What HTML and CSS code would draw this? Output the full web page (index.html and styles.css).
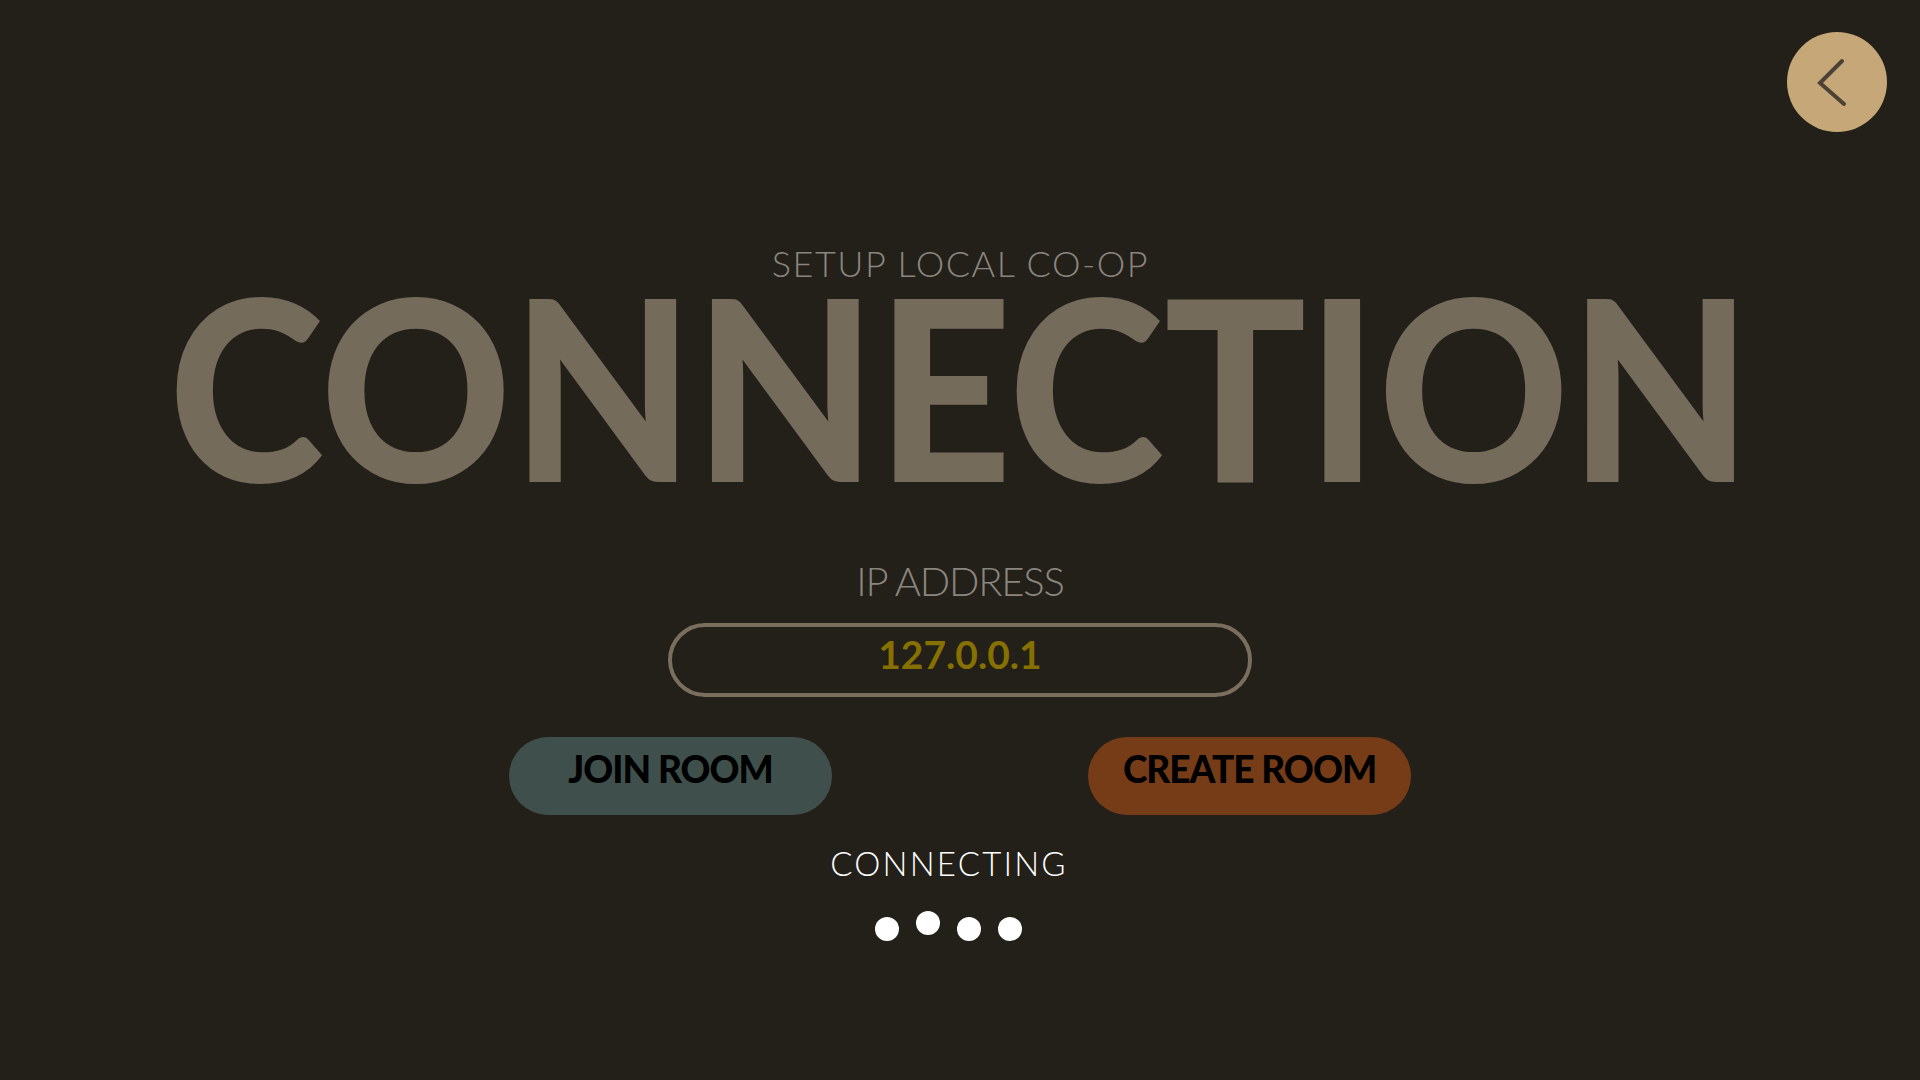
FILE: index.html
```html
<!DOCTYPE html>
<html lang="en">
<head>
<meta charset="utf-8">
<title>Connection</title>
<link rel="stylesheet" href="styles.css">
</head>
<body>
<button class="back" aria-label="Back">
  <svg viewBox="0 0 100 100" width="100" height="100"><polyline points="55,29 33,51 57,72" /></svg>
</button>
<main class="screen">
  <p class="subtitle">SETUP LOCAL CO-OP</p>
  <h1 class="title">CONNECTION</h1>
  <p class="ip-label">IP ADDRESS</p>
  <div class="ip-field">127.0.0.1</div>
  <div class="actions">
    <button class="btn join">JOIN ROOM</button>
    <button class="btn create">CREATE ROOM</button>
  </div>
  <div class="status">
    <p class="status-text">CONNECTING</p>
    <div class="dots">
      <span class="dot"></span>
      <span class="dot raised"></span>
      <span class="dot"></span>
      <span class="dot"></span>
    </div>
  </div>
</main>
</body>
</html>
```
FILE: styles.css
```css
html, body {
  margin: 0;
  padding: 0;
}
body {
  width: 1920px;
  height: 1080px;
  overflow: hidden;
  background: #231f19;
  font-family: "Lato", "Liberation Sans", sans-serif;
  position: relative;
}
.back {
  position: absolute;
  top: 32px;
  right: 33px;
  width: 100px;
  height: 100px;
  border-radius: 50%;
  border: 0;
  padding: 0;
  background: #c6a878;
  display: block;
}
.back svg {
  display: block;
}
.back polyline {
  fill: none;
  stroke: #4b4134;
  stroke-width: 4;
  stroke-linecap: round;
  stroke-linejoin: miter;
}
.screen {
  display: flex;
  flex-direction: column;
  align-items: center;
  padding-top: 245px;
}
.subtitle {
  margin: 0 -1px 0 0;
  font-size: 36px;
  line-height: 36px;
  font-weight: 300;
  letter-spacing: 1.5px;
  color: #8a867f;
}
.title {
  margin: 4px 0 0;
  font-size: 251px;
  line-height: 0.8;
  font-weight: 900;
  color: #746b5b;
  letter-spacing: 0;
  white-space: nowrap;
  transform: scaleX(0.94);
}
.ip-label {
  margin: 75px 0 0;
  font-size: 40px;
  line-height: 40px;
  font-weight: 300;
  letter-spacing: -1.2px;
  color: #8a867f;
}
.ip-field {
  margin-top: 22px;
  box-sizing: border-box;
  width: 584px;
  height: 74px;
  border: 4px solid #7a6f5e;
  border-radius: 37px;
  text-align: center;
  font-size: 39px;
  line-height: 54px;
  padding-bottom: 12px;
  font-weight: 700;
  color: #857000;
}
.actions {
  margin-top: 40px;
  display: flex;
  gap: 256px;
}
.btn {
  box-sizing: border-box;
  width: 323px;
  height: 78px;
  border: 0;
  border-radius: 39px;
  padding: 0 0 14px;
  font-family: "Lato", "Liberation Sans", sans-serif;
  font-size: 37px;
  line-height: 64px;
  font-weight: 900;
  letter-spacing: -1px;
  color: #000;
}
.join {
  background: #3f504c;
}
.create {
  background: #763c17;
}
.status {
  margin-top: 32px;
  margin-right: 24px;
  display: flex;
  flex-direction: column;
  align-items: center;
}
.status-text {
  margin: 0 -2px 0 0;
  font-size: 33px;
  line-height: 32px;
  font-weight: 300;
  letter-spacing: 2.2px;
  color: #ffffff;
}
.dots {
  margin-top: 38px;
  display: flex;
  gap: 17px;
}
.dot {
  width: 24px;
  height: 24px;
  border-radius: 50%;
  background: #ffffff;
}
.dot.raised {
  transform: translateY(-6px);
}
```
